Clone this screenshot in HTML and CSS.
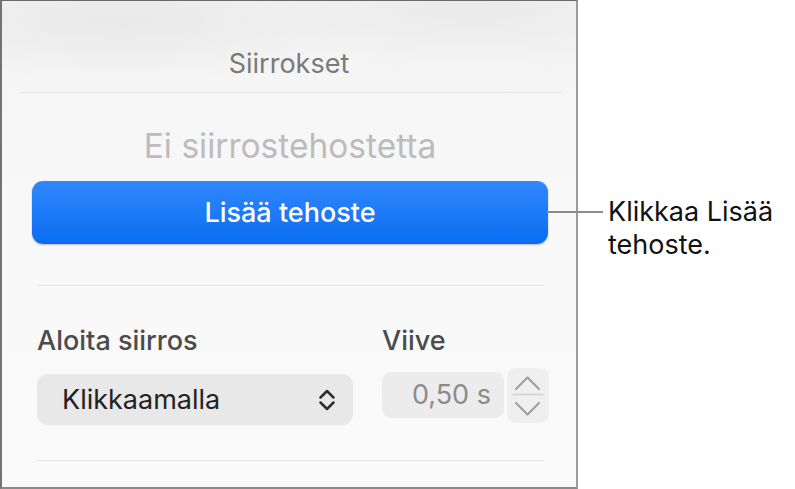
FILE: index.html
```html
<!DOCTYPE html>
<html lang="fi">
<head>
    <meta charset="UTF-8">
    <meta name="viewport" content="width=device-width, initial-scale=1.0">
    <title>Siirrokset</title>
    <link rel="stylesheet" href="styles.css">
</head>
<body>
    <div class="stage">
        <section class="panel">
            <h2 class="panel-title">Siirrokset</h2>
            <hr class="rule rule-wide">
            <div class="effect">
                <p class="empty">Ei siirrostehostetta</p>
                <button class="add">Lisää tehoste</button>
            </div>
            <hr class="rule">
            <div class="fields">
                <div class="field start">
                    <span class="label">Aloita siirros</span>
                    <div class="select">
                        <span>Klikkaamalla</span>
                        <svg class="updown" width="18" height="24" viewBox="0 0 18 24">
                            <path d="M2.5 9.5 L9 3 L15.5 9.5" />
                            <path d="M2.5 14.5 L9 21 L15.5 14.5" />
                        </svg>
                    </div>
                </div>
                <div class="field delay">
                    <span class="label">Viive</span>
                    <div class="delay-row">
                        <div class="num">0,50 s</div>
                        <div class="stepper">
                            <svg width="42" height="55" viewBox="0 0 42 55">
                                <path d="M9 21 L20.5 9.5 L32 21" />
                                <path d="M6 26.5 L36 26.5" class="mid" />
                                <path d="M9 35 L20.5 46.5 L32 35" />
                            </svg>
                        </div>
                    </div>
                </div>
            </div>
            <hr class="rule">
        </section>
        <p class="callout">Klikkaa Lisää<br>tehoste.</p>
    </div>
</body>
</html>
```

FILE: styles.css
```css
* {
    margin: 0;
    padding: 0;
    box-sizing: border-box;
}

body {
    background: #ffffff;
    font-family: Inter, "Liberation Sans", sans-serif;
}

.stage {
    display: flex;
    align-items: flex-start;
    width: 795px;
    height: 489px;
}

/* inspector panel */
.panel {
    width: 578px;
    height: 489px;
    flex-shrink: 0;
    border-left: 2px solid #737373;
    border-top: 1px solid #6a6a6a;
    border-right: 2px solid #9c9c9c;
    border-bottom: 2px solid #8a8a8a;
    background:
        radial-gradient(ellipse 260px 60px at 120px 20px, rgba(228, 228, 228, .7), rgba(228, 228, 228, 0)),
        radial-gradient(ellipse 240px 60px at 470px 10px, rgba(230, 230, 230, .7), rgba(230, 230, 230, 0)),
        linear-gradient(#f3f3f3, #f8f8f8 40%, #fafafa);
    padding-top: 48px;
}

.panel-title {
    font-size: 27px;
    line-height: 30px;
    font-weight: 400;
    color: #7a7a7a;
    text-align: center;
}

.rule {
    border: 0;
    height: 1px;
    background: #e4e4e4;
    margin: 0 32px 0 35px;
}

.rule-wide {
    margin: 13px 15px 0 18px;
}

.effect {
    display: flex;
    flex-direction: column;
    align-items: center;
    padding: 34px 28px 41px 30px;
}

.empty {
    font-size: 33.5px;
    line-height: 38px;
    color: #bcbcbc;
}

.add {
    margin-top: 16px;
    width: 100%;
    height: 63px;
    border: 0;
    border-radius: 11px;
    background: linear-gradient(#3088fd, #0b6cf1);
    box-shadow: 0 1px 2px rgba(0, 0, 0, .25);
    color: #ffffff;
    font-family: Inter, "Liberation Sans", sans-serif;
    font-size: 27px;
    font-weight: 500;
}

.fields {
    display: flex;
    gap: 29px;
    padding: 40px 0 35px 35px;
}

.field {
    display: flex;
    flex-direction: column;
}

.label {
    font-size: 27px;
    line-height: 30px;
    font-weight: 500;
    color: #4b4b4b;
}

.start .select {
    margin-top: 18px;
}

.select {
    width: 316px;
    height: 51px;
    border-radius: 11px;
    background: #e8e8e8;
    display: flex;
    align-items: center;
    justify-content: space-between;
    padding: 0 17px 0 25px;
    font-size: 27px;
    color: #222222;
}

.updown path {
    fill: none;
    stroke: #2e2e2e;
    stroke-width: 2.5;
    stroke-linecap: round;
    stroke-linejoin: round;
}

.delay-row {
    display: flex;
    align-items: flex-start;
    gap: 3px;
    margin-top: 12px;
}

.num {
    margin-top: 4px;
    width: 122px;
    height: 46px;
    border-radius: 9px;
    background: #ececec;
    font-size: 27px;
    line-height: 46px;
    color: #8b8b8b;
    text-align: right;
    padding-right: 13px;
}

.stepper {
    width: 42px;
    height: 55px;
    border-radius: 9px;
    background: #efefef;
}

.stepper svg {
    display: block;
}

.stepper path {
    fill: none;
    stroke: #a0a0a0;
    stroke-width: 2.2;
    stroke-linecap: round;
    stroke-linejoin: round;
}

.stepper .mid {
    stroke: #d0d0d0;
    stroke-width: 1.5;
}

/* annotation */
.callout {
    position: relative;
    margin: 195px 0 0 30px;
    font-size: 27px;
    line-height: 33px;
    color: #111111;
}

.callout::before {
    content: "";
    position: absolute;
    right: calc(100% + 5px);
    top: 16px;
    width: 56px;
    height: 2px;
    background: #8c8c8c;
}
```
